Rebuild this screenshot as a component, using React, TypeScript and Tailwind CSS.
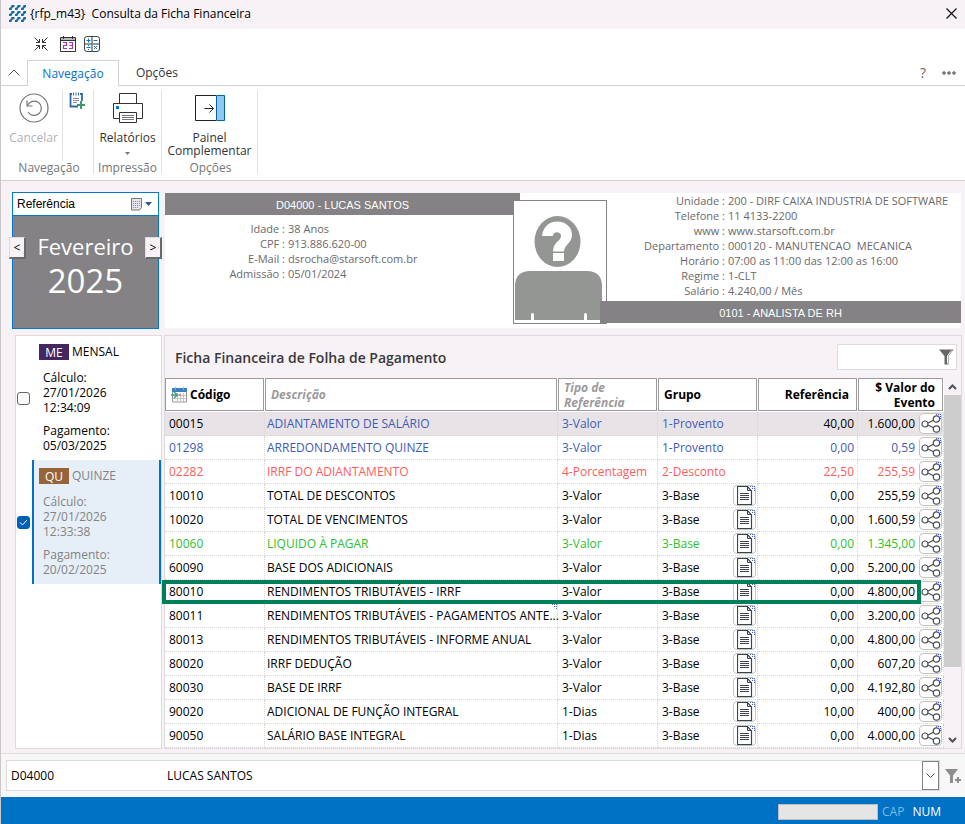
import { useState } from "react"

type Evento = {
    codigo: string
    descricao: string
    tipo: string
    grupo: string
    referencia: string
    valor: string
    cor?: "azul" | "vermelho" | "verde"
    marca?: boolean
}

type Calculo = {
    sigla: string
    nome: string
    data: string
    hora: string
    pagamento: string
}

const eventos: Evento[] = [
    { codigo: "00015", descricao: "ADIANTAMENTO DE SALÁRIO", tipo: "3-Valor", grupo: "1-Provento", referencia: "40,00", valor: "1.600,00", cor: "azul" },
    { codigo: "01298", descricao: "ARREDONDAMENTO QUINZE", tipo: "3-Valor", grupo: "1-Provento", referencia: "0,00", valor: "0,59", cor: "azul" },
    { codigo: "02282", descricao: "IRRF DO ADIANTAMENTO", tipo: "4-Porcentagem", grupo: "2-Desconto", referencia: "22,50", valor: "255,59", cor: "vermelho" },
    { codigo: "10010", descricao: "TOTAL DE DESCONTOS", tipo: "3-Valor", grupo: "3-Base", referencia: "0,00", valor: "255,59" },
    { codigo: "10020", descricao: "TOTAL DE VENCIMENTOS", tipo: "3-Valor", grupo: "3-Base", referencia: "0,00", valor: "1.600,59" },
    { codigo: "10060", descricao: "LIQUIDO À PAGAR", tipo: "3-Valor", grupo: "3-Base", referencia: "0,00", valor: "1.345,00", cor: "verde" },
    { codigo: "60090", descricao: "BASE DOS ADICIONAIS", tipo: "3-Valor", grupo: "3-Base", referencia: "0,00", valor: "5.200,00" },
    { codigo: "80010", descricao: "RENDIMENTOS TRIBUTÁVEIS - IRRF", tipo: "3-Valor", grupo: "3-Base", referencia: "0,00", valor: "4.800,00" },
    { codigo: "80011", descricao: "RENDIMENTOS TRIBUTÁVEIS - PAGAMENTOS ANTE...", tipo: "3-Valor", grupo: "3-Base", referencia: "0,00", valor: "3.200,00", marca: true },
    { codigo: "80013", descricao: "RENDIMENTOS TRIBUTÁVEIS - INFORME ANUAL", tipo: "3-Valor", grupo: "3-Base", referencia: "0,00", valor: "4.800,00" },
    { codigo: "80020", descricao: "IRRF DEDUÇÃO", tipo: "3-Valor", grupo: "3-Base", referencia: "0,00", valor: "607,20" },
    { codigo: "80030", descricao: "BASE DE IRRF", tipo: "3-Valor", grupo: "3-Base", referencia: "0,00", valor: "4.192,80" },
    { codigo: "90020", descricao: "ADICIONAL DE FUNÇÃO INTEGRAL", tipo: "1-Dias", grupo: "3-Base", referencia: "10,00", valor: "400,00" },
    { codigo: "90050", descricao: "SALÁRIO BASE INTEGRAL", tipo: "1-Dias", grupo: "3-Base", referencia: "0,00", valor: "4.000,00" },
]

const calculos: Calculo[] = [
    { sigla: "ME", nome: "MENSAL", data: "27/01/2026", hora: "12:34:09", pagamento: "05/03/2025" },
    { sigla: "QU", nome: "QUINZE", data: "27/01/2026", hora: "12:33:38", pagamento: "20/02/2025" },
]

const dadosPessoais = [
    ["Idade", "38 Anos"],
    ["CPF", "913.886.620-00"],
    ["E-Mail", "dsrocha@starsoft.com.br"],
    ["Admissão", "05/01/2024"],
]

const dadosEmpresa = [
    ["Unidade", "200 - DIRF CAIXA INDUSTRIA DE SOFTWARE"],
    ["Telefone", "11 4133-2200"],
    ["www", "www.starsoft.com.br"],
    ["Departamento", "000120 - MANUTENCAO  MECANICA"],
    ["Horário", "07:00 as 11:00 das 12:00 as 16:00"],
    ["Regime", "1-CLT"],
    ["Salário", "4.240,00 / Mês"],
]

const corTexto = (cor?: string) => {
    switch (cor) {
        case 'azul':
            return 'text-[#3f5bb5]'
        case 'vermelho':
            return 'text-[#ff5c5c]'
        case 'verde':
            return 'text-[#2fc02f]'
        default:
            return 'text-black'
    }
}

function Logo() {
    return (
        <svg width="17" height="17" viewBox="0 0 17 17" fill="#1b6f9e">
            {[0, 6, 12].map(y => [0, 6, 12].map(x => (
                <path key={`${x}-${y}`} d={`M${x} ${y + 3}q2 0 2.500-3h3v2q-2.500 0-3 3h-2.500z`} />
            )))}
        </svg>
    )
}

function CollapseIcon() {
    return (
        <svg width="14" height="14" viewBox="0 0 14 14" fill="none" stroke="#333" strokeWidth="1">
            <path d="M.5.5l5 5M2 5.500h3.500V2M13.500.5l-5 5M12 5.500H8.500V2M.5 13.500l5-5M2 8.500h3.500V12M13.500 13.500l-5-5M12 8.500H8.500V12" />
        </svg>
    )
}

function CalendarIcon() {
    return (
        <svg width="16" height="16" viewBox="0 0 16 16" fill="none">
            <path d="M.5 1.500h15v14H.5z" stroke="#333" />
            <path d="M1 2h14v2H1z" fill="#bbb" />
            <path d="M.5 4.500h15M3.500 0v3M12.500 0v3" stroke="#333" />
            <path d="M3 6.500h3.500v3h-3v3H7M9 6.500h3.500v6H9M9.500 9.500h3" stroke="#a03aa8" strokeWidth="1.200" />
        </svg>
    )
}

function CalculatorIcon() {
    return (
        <svg width="16" height="16" viewBox="0 0 16 16" fill="none">
            <rect x=".5" y=".5" width="15" height="15" rx="2.500" stroke="#444" />
            <path d="M8 1v14M1 8h14" stroke="#777" strokeWidth="1.500" />
            <path d="M2.500 4.500h4M4.500 2.500v4M9.500 4.500h4M2.500 11.500h4M10 10l3 3M13 10l-3 3" stroke="#0078d4" />
            <path d="M4 9.500h1M4 13.500h1" stroke="#0078d4" />
        </svg>
    )
}

function UndoIcon() {
    return (
        <svg width="30" height="30" viewBox="0 0 30 30" fill="none" stroke="#767676" strokeWidth="1.200">
            <circle cx="15" cy="15" r="14" />
            <path d="M8 7.500v5.500h5.500" />
            <path d="M8.500 12.500a7.200 7.200 0 1 1 .5 6.500" />
        </svg>
    )
}

function NoteAddIcon() {
    return (
        <svg width="16" height="17" viewBox="0 0 16 17" fill="none">
            <path d="M3 2H1.500v12.500H9M11 2h2v7" stroke="#2f6aa8" strokeWidth="1.800" />
            <path d="M4.500.5v3M7 .5v3M9.500.5v3" stroke="#2f6aa8" />
            <path d="M4 6.500h6M4 8.500h6M4 10.500h4" stroke="#889" />
            <path d="M12 9v8M8 13h8" stroke="#3a9a6c" strokeWidth="2" />
        </svg>
    )
}

function PrinterIcon() {
    return (
        <svg width="30" height="30" viewBox="0 0 30 30" fill="#fff" stroke="#333">
            <path d="M6.500 10.500v-10h17v10" />
            <path d="M6.500 25.500h-6v-15h29v15h-6" />
            <path d="M6.500 19.500h17v10h-17z" />
            <path d="M9 22.500h12M9 24.500h12M9 26.500h12" stroke="#777" />
            <path d="M3 13h3v3H3z" fill="#0078d4" stroke="none" />
        </svg>
    )
}

function PanelIcon() {
    return (
        <svg width="30" height="26" viewBox="0 0 30 26" fill="none">
            <path d="M21 .5H.5v25H21" stroke="#222" />
            <path d="M21.500.5h8v25h-8z" fill="#90c8f0" stroke="#0063b1" />
            <path d="M9.500 13.500h9M14.500 9.500l4 4-4 4" stroke="#222" />
        </svg>
    )
}

function Avatar() {
    return (
        <svg width="92" height="122" viewBox="0 0 92 122" className="block">
            <ellipse cx="43.500" cy="40.500" rx="23" ry="25.500" fill="#939692" />
            <path d="M28 35c1-9 7-14.500 15-14.500 9 0 15 6 15 13 0 9-8 10-8 17H39c0-10 8-10 8-15.500 0-5-8-5-8 0z" fill="#fff" />
            <path d="M44 47h1v2h-1z" fill="#fff" />
            <path d="M39 52h11v8H39z" fill="#fff" />
            <path d="M1 119V84q1-14 15-14h57q14 0 15 14v35z" fill="#939692" />
            <path d="M17 119v-6q1.500-2 3 0v6zM70 119v-6q1.500-2 3 0v6z" fill="#fff" />
        </svg>
    )
}

function FunnelIcon() {
    return (
        <svg width="15" height="16" viewBox="0 0 15 16">
            <path d="M0 .5h14.500L9.500 7v8.500h-4V7z" fill="#666" />
            <path d="M12.500 1.500L8.500 7v7.500" stroke="#fff" fill="none" />
        </svg>
    )
}

function ImportIcon() {
    return (
        <svg width="16" height="16" viewBox="0 0 16 16" fill="none">
            <path d="M1.500 2.500h14v12.500h-14z" fill="#fafafa" stroke="#999" />
            <path d="M1 1h15v4H1z" fill="#3c7fc0" />
            <path d="M4.500 0v3M12.500 0v3" stroke="#aaa" />
            <path d="M6.500 6v9M9.500 6v9M12.500 6v9M2 8.500h13M2 11.500h13" stroke="#c4c4c4" />
            <path d="M0 8h5M3 5l3.500 3L3 11" stroke="#43a07d" strokeWidth="1.500" />
            <path d="M8 7h2v2H8z" fill="#e0857a" />
        </svg>
    )
}

function DocIcon() {
    return (
        <svg width="16" height="19" viewBox="0 0 16 19" fill="none" stroke="#3d434c">
            <path d="M.5.5h10l4 4.500v13.500H.5z" fill="#fff" strokeWidth="1.200" />
            <path d="M10.500.5v4h4M3 7.500h9M3 9.500h9M3 11.500h9M3 13.500h9" />
        </svg>
    )
}

function ShareIcon() {
    return (
        <svg width="20" height="18" viewBox="0 0 20 18" fill="none" stroke="#4a4f57" strokeWidth="1.200">
            <circle cx="4" cy="9" r="3" />
            <circle cx="15.500" cy="4" r="3.200" />
            <circle cx="15.500" cy="14" r="3.200" />
            <path d="M7 8l5.500-2.700M7 10l5.500 2.700" />
        </svg>
    )
}

// pontinhos azuis no canto do botão
function Dots() {
    return (
        <svg width="5" height="5" viewBox="0 0 5 5" fill="#4060e0" className="absolute top-0 right-0">
            <path d="M0 0h1v1H0zM2 0h1v1H2zM4 0h1v1H4zM2 2h1v1H2zM4 2h1v1H4zM4 4h1v1H4z" />
        </svg>
    )
}

function Chevron({ up = false }: { up?: boolean }) {
    return (
        <svg width="9" height="6" viewBox="0 0 9 6" fill="none" stroke="#505050" strokeWidth="2">
            <path d={up ? "M1 5l3.500-3.500L8 5" : "M1 1l3.500 3.500L8 1"} />
        </svg>
    )
}

function TitleBar() {
    return (
        <header className="flex h-[29px] items-center gap-1 bg-[#f6f2f6] pr-1 pb-0.5 pl-2 text-black">
            <Logo />
            <h1 className="flex-1 whitespace-pre text-[12px]">{"{rfp_m43}  Consulta da Ficha Financeira"}</h1>
            <button aria-label="Fechar" className="p-1">
                <svg width="11" height="11" viewBox="0 0 11 11" stroke="#111" strokeWidth="1.200"><path d="M.5.5l10 10M10.500.5l-10 10" /></svg>
            </button>
        </header>
    )
}

function Ribbon() {
    return (
        <nav className="bg-white">
            <div className="flex h-[31px] items-center gap-2 pb-px pl-[33px]">
                <button aria-label="Recolher" className="mr-1"><CollapseIcon /></button>
                <button aria-label="Calendário"><CalendarIcon /></button>
                <button aria-label="Calculadora"><CalculatorIcon /></button>
            </div>
            <div className="flex h-[26px] items-end border-b border-[#d2d2d2] text-[12px]">
                <button aria-label="Ocultar faixa" className="flex h-full w-[26px] items-center justify-center">
                    <svg width="12" height="7" viewBox="0 0 12 7" fill="none" stroke="#555"><path d="M.5 6.500L6 1l5.500 5.500" /></svg>
                </button>
                <button className="-mb-px h-[26px] w-[92px] border border-b-0 border-[#d2d2d2] bg-white text-[#0072c6]">Navegação</button>
                <button className="h-[26px] w-[76px] pt-0.5 text-[#333]">Opções</button>
                <div className="flex h-full flex-1 items-center justify-end gap-4 pr-[9px]">
                    <button aria-label="Ajuda" className="text-[14px] text-[#666]">?</button>
                    <button aria-label="Mais">
                        <svg width="14" height="4" viewBox="0 0 14 4" fill="#fff" stroke="#333"><circle cx="2" cy="2" r="1.200" /><circle cx="7" cy="2" r="1.200" /><circle cx="12" cy="2" r="1.200" /></svg>
                    </button>
                </div>
            </div>
            <div className="flex h-[95px] items-start border-b border-[#d2d2d2] py-1 text-[12px] leading-[13px] text-[#333]">
                <section className="flex h-[84px] w-[93px] flex-col border-r border-[#e1e1e1]">
                    <div className="flex h-[71px]">
                        <button className="flex w-[62px] flex-col items-center gap-2 border-r border-[#e1e1e1] pt-[3px] pl-1 text-[#b4b0b4]">
                            <UndoIcon />
                            Cancelar
                        </button>
                        <button aria-label="Nova nota" className="flex flex-1 justify-center pt-0.5 pr-0.5"><NoteAddIcon /></button>
                    </div>
                    <p className="pl-1 text-center text-[#767676]">Navegação</p>
                </section>
                <section className="flex h-[84px] w-[68px] flex-col border-r border-[#e1e1e1]">
                    <button className="flex h-[71px] flex-col items-center gap-2 pt-[3px]">
                        <PrinterIcon />
                        Relatórios
                        <svg width="5" height="3" viewBox="0 0 5 3" fill="#777"><path d="M0 0h5L2.500 3z" /></svg>
                    </button>
                    <p className="text-center text-[#767676]">Impressão</p>
                </section>
                <section className="flex h-[84px] w-[96px] flex-col border-r border-[#e1e1e1]">
                    <button className="flex h-[71px] flex-col items-center pt-[5px]">
                        <PanelIcon />
                        <span className="pt-2.5">Painel<br />Complementar</span>
                    </button>
                    <p className="pl-0.5 text-center text-[#767676]">Opções</p>
                </section>
            </div>
        </nav>
    )
}

function MonthPicker() {
    const passo = "absolute top-[44px] h-[22px] w-[17px] border border-r-2 border-b-2 border-[#dcdcdc] border-r-[#696969] border-b-[#696969] bg-[#f6f2f6] text-[12px] leading-[18px] text-black"
    return (
        <section className="relative flex w-[147px] shrink-0 flex-col border border-[#0078d4] bg-[#848284] text-white">
            <div className="flex h-[23px] items-center border-b border-[#0078d4] bg-white pr-1.5 pl-1 text-black">
                <span className="flex-1 font-['Liberation_Sans',sans-serif] text-[12px]">Referência</span>
                <button aria-label="Escolher mês" className="flex items-center gap-0.5">
                    <svg width="12" height="13" viewBox="0 0 12 13" fill="none">
                        <path d="M.5.5h10v9l-2 2.500h-8z" fill="#e4e4ee" stroke="#777" />
                        <path d="M2 3.500h7M2 5.500h7M2 7.500h7M2 9.500h5" stroke="#8c8ca0" strokeDasharray="1 1" />
                    </svg>
                    <svg width="7" height="4" viewBox="0 0 7 4" fill="#34558b"><path d="M0 0h7L3.500 4z" /></svg>
                </button>
            </div>
            <p className="pt-[14px] text-center text-[22px] leading-8">Fevereiro</p>
            <p className="text-center text-[33px] leading-[38px]">2025</p>
            <button aria-label="Mês anterior" className={`${passo} -left-1`}>&lt;</button>
            <button aria-label="Próximo mês" className={`${passo} -right-1`}>&gt;</button>
        </section>
    )
}

function DataList({ itens }: { itens: string[][] }) {
    return (
        <dl className="text-[11px] leading-[15px] text-[#6b696b]">
            {itens.map(([rotulo, valor]) => (
                <div key={rotulo} className="flex gap-[3px]">
                    <dt className="w-[120px] shrink-0 text-right">{rotulo} :</dt>
                    <dd className="whitespace-pre">{valor}</dd>
                </div>
            ))}
        </dl>
    )
}

function EmployeeCard() {
    return (
        <section className="flex h-[135px] flex-1 bg-white">
            <div className="flex-[355]">
                <h2 className="flex h-[22px] items-center justify-center bg-[#848284] pt-0.5 font-['Liberation_Sans',sans-serif] text-[11px] text-white">D04000 - LUCAS SANTOS</h2>
                <div className="pt-1.5"><DataList itens={dadosPessoais} /></div>
            </div>
            <div className="relative flex-[441]">
                <div className="absolute top-[7px] -left-[7px] border border-[#848284] bg-white">
                    <Avatar />
                </div>
                <div className="h-[108px] pl-[85px]"><DataList itens={dadosEmpresa} /></div>
                <h2 className="relative ml-20 flex h-[22px] items-center justify-center bg-[#848284] pt-0.5 font-['Liberation_Sans',sans-serif] text-[11px] text-white">0101 - ANALISTA DE RH</h2>
            </div>
        </section>
    )
}

function CalculoList() {
    const [marcado, setMarcado] = useState<string>("QU");
    return (
        <aside className="w-[147px] shrink-0 border border-[#dedade] bg-white">
            {calculos.map(calculo => {
                const ativo = marcado === calculo.sigla
                return (
                    <label key={calculo.sigla} className="flex h-[124px] items-center text-[12px]">
                        <span className="ml-px grid shrink-0 place-items-center">
                            <input
                                type="checkbox"
                                checked={ativo}
                                onChange={() => setMarcado(calculo.sigla)}
                                className="col-start-1 row-start-1 size-[13px] appearance-none rounded-[3px] border border-[#666] bg-[#fafafa] checked:border-[#005fb8] checked:bg-[#005fb8]"
                            />
                            {ativo && (
                                <svg width="9" height="7" viewBox="0 0 9 7" fill="none" stroke="#fff" className="pointer-events-none col-start-1 row-start-1"><path d="M1 3.500L3.500 6 8 1" /></svg>
                            )}
                        </span>
                        <span className={`ml-0.5 flex h-full flex-1 flex-col border-x-2 pt-2 pl-[5px] leading-[15px] ${ativo ? "border-[#0072c6] bg-[#e6eff7] text-[#848284]" : "border-transparent text-black"}`}>
                            <span className="flex gap-[3px]">
                                <span className={`flex h-4 w-[30px] items-center justify-center text-white ${calculo.sigla === "ME" ? "bg-[#46265f]" : "bg-[#976338]"}`}>{calculo.sigla}</span>
                                <span>{calculo.nome}</span>
                            </span>
                            <span className="mt-2.5 pl-1">Cálculo:<br />{calculo.data}<br />{calculo.hora}</span>
                            <span className="mt-2 pl-1">Pagamento:<br />{calculo.pagamento}</span>
                        </span>
                    </label>
                )
            })}
        </aside>
    )
}

function EventTable() {
    const th = "flex h-[33px] items-center border border-[#9c9a9c] bg-white pr-[7px] pl-[5px] leading-[15px]"
    const td = "h-6 border-r border-b border-dotted border-[#d8d4d8] py-0 align-middle whitespace-nowrap"
    const botao = "relative flex h-[21px] w-[23px] items-center justify-center rounded-[4px] border border-[#c4c4c4] bg-white"
    return (
        <table className="w-full table-fixed border-separate border-spacing-0 bg-white text-[12px]">
            <colgroup>
                <col className="w-[100px]" />
                <col />
                <col className="w-[100px]" />
                <col className="w-[100px]" />
                <col className="w-[100px]" />
                <col className="w-[86px]" />
            </colgroup>
            <thead className="text-left">
                <tr>
                    <th className="p-0 pr-px pb-px font-bold"><div className={`${th} gap-[3px]`}><ImportIcon /> Código</div></th>
                    <th className="p-0 pr-px pb-px font-bold text-[#9c9a9c] italic"><div className={th}>Descrição</div></th>
                    <th className="p-0 pr-px pb-px font-bold text-[#9c9a9c] italic"><div className={th}>Tipo de<br />Referência</div></th>
                    <th className="p-0 pr-px pb-px font-bold"><div className={th}>Grupo</div></th>
                    <th className="p-0 pr-px pb-px font-bold"><div className={`${th} justify-end`}>Referência</div></th>
                    <th className="p-0 pr-px pb-px text-right font-bold"><div className={`${th} justify-end`}>$ Valor do<br />Evento</div></th>
                </tr>
            </thead>
            <tbody>
                {eventos.map((evento, i) => (
                    <tr key={evento.codigo} className={`relative ${corTexto(evento.cor)} ${i === 0 ? "bg-[#e7e3e7]" : "bg-white"}`}>
                        <td className={`${td} pr-0 pl-1 ${i === 0 ? "text-black" : ""}`}>{evento.codigo}</td>
                        <td className={`${td} relative pr-0 pl-0.5`}>
                            {evento.descricao}
                            {evento.marca && <Dots />}
                        </td>
                        <td className={`${td} pr-0 pl-1`}>{evento.tipo}</td>
                        <td className={`${td} pr-px pl-1`}>
                            <div className="flex items-center justify-between">
                                {evento.grupo}
                                {evento.grupo === "3-Base" && <button aria-label="Detalhes" className={botao}><DocIcon /><Dots /></button>}
                            </div>
                        </td>
                        <td className={`${td} pr-[3px] pl-1 text-right ${i === 0 ? "text-black" : ""}`}>{evento.referencia}</td>
                        <td className={`${td} pr-px pl-1 ${i === 0 ? "text-black" : ""}`}>
                            <div className="flex items-center justify-end gap-1">
                                {evento.valor}
                                <button aria-label="Compartilhar" className={botao}><ShareIcon /><Dots /></button>
                            </div>
                            {evento.codigo === "80010" && <span className="absolute top-0 right-[23px] bottom-0 -left-[3px] border-4 border-[#00805a]" />}
                        </td>
                    </tr>
                ))}
            </tbody>
        </table>
    )
}

function EventPanel() {
    return (
        <section className="min-w-0 flex-1 border border-[#dedade] bg-[#f6f2f6]">
            <div className="flex h-[42px] items-center pr-1 pl-2.5">
                <h2 className="flex-1 text-[14px] font-semibold text-[#3a383a]">Ficha Financeira de Folha de Pagamento</h2>
                <div className="flex h-[26px] w-[120px] items-center border border-[#dedade] bg-white pr-0.5">
                    <input aria-label="Filtrar" className="h-full min-w-0 flex-1 px-1 text-[12px] outline-none" />
                    <FunnelIcon />
                </div>
            </div>
            <div className="flex">
                <div className="min-w-0 flex-1"><EventTable /></div>
                <div className="flex w-[17px] shrink-0 flex-col items-center">
                    <button aria-label="Subir" className="flex h-[17px] w-full items-center justify-center"><Chevron up /></button>
                    <div className="w-full flex-[272] bg-[#cdcdcd]" />
                    <div className="w-full flex-[64]" />
                    <button aria-label="Descer" className="flex h-[17px] w-full items-center justify-center"><Chevron /></button>
                </div>
            </div>
        </section>
    )
}

function Footer() {
    return (
        <footer>
            <div className="flex h-[44px] items-center gap-1 border-t border-[#dedade] bg-[#f7f7f7] pl-[5px] text-[12px] text-black">
                <div className="flex h-[31px] flex-1 border border-[#dedade] bg-white">
                    <input aria-label="Código" defaultValue="D04000" className="w-[156px] px-1 outline-none" />
                    <input aria-label="Nome" defaultValue="LUCAS SANTOS" className="min-w-0 flex-1 px-1 outline-none" />
                    <button aria-label="Abrir lista" className="flex w-[17px] items-center justify-center border border-[#848284]">
                        <svg width="9" height="6" viewBox="0 0 9 6" fill="none" stroke="#444"><path d="M.5.5l4 4 4-4" /></svg>
                    </button>
                </div>
                <button aria-label="Adicionar filtro" className="pt-0.5 pr-1 pl-px">
                    <svg width="16" height="15" viewBox="0 0 16 15" fill="#8e8c8e">
                        <path d="M0 0h13L8 6.500V14H5V6.500z" />
                        <path d="M10 11h6M13 8v6" stroke="#8e8c8e" strokeWidth="2" />
                    </svg>
                </button>
            </div>
            <div className="flex h-[27px] items-center justify-end bg-[#0072c6] pt-0.5 pr-6 text-[12px] text-white">
                <span className="h-4 w-[100px] border border-[#bdbdbd] bg-[#e5e5e5]" />
                <span className="ml-1 text-[#7fb8e6]">CAP</span>
                <span className="ml-2">NUM</span>
            </div>
        </footer>
    )
}

export default function App() {
    return (
        <div className="flex min-h-screen flex-col border-l border-[#cac6ca] bg-[#f6f2f6] font-['Open_Sans','Noto_Sans',sans-serif]">
            <TitleBar />
            <Ribbon />
            <main className="flex flex-1 flex-col gap-1.5 pt-[11px] pr-[3px] pb-1 pl-[11px]">
                <div className="flex h-[137px] gap-1.5 pr-px">
                    <MonthPicker />
                    <div className="flex flex-1 pt-px"><EmployeeCard /></div>
                </div>
                <div className="flex flex-1 gap-0.5 pl-[3px]">
                    <CalculoList />
                    <EventPanel />
                </div>
            </main>
            <Footer />
        </div>
    )
}
